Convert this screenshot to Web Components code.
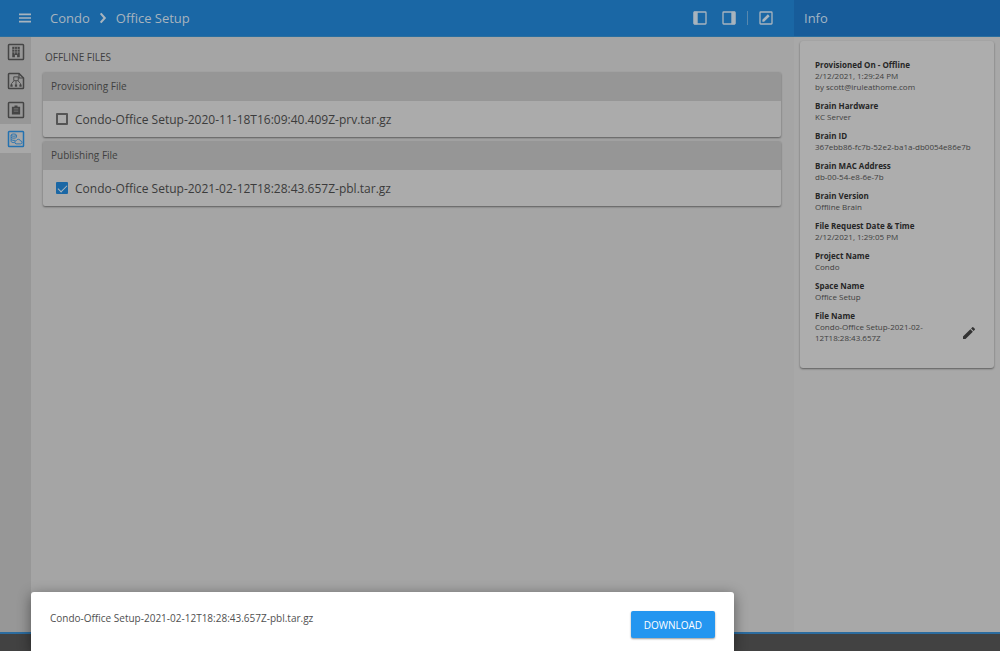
<!DOCTYPE html>
<html lang="en">
<head>
<meta charset="utf-8">
<title>Office Setup</title>
<style>
html, body { height: 100%; margin: 0; }
body { font-family: "Open Sans", "Noto Sans", sans-serif; color: #404040; background: #a5a5a5; }
</style>
</head>
<body>
<office-app></office-app>
<script>
function define(name, html, setup) {
  const template = document.createElement('template');
  template.innerHTML = '<style>*{box-sizing:border-box}</style>' + html;
  customElements.define(name, class extends HTMLElement {
    connectedCallback() {
      if (this.shadowRoot) return;
      this.attachShadow({ mode: 'open' }).append(template.content.cloneNode(true));
      if (setup) setup(this, this.shadowRoot);
    }
  });
}

const icons = {
  menu: '<path d="M3 6.500h18M3 12h18M3 17.500h18" stroke-width="2.400"/>',
  chevron: '<path d="M8 4l7 8-7 8" stroke-width="3.600"/>',
  left: '<rect x="3" y="3" width="18" height="18" rx="1" stroke-width="2"/><path d="M3 3h5v18H3z" fill="currentColor"/>',
  right: '<rect x="3" y="3" width="18" height="18" rx="1" stroke-width="2"/><path d="M16 3h5v18h-5z" fill="currentColor"/>',
  edit: '<rect x="3" y="3" width="18" height="18" rx="1" stroke-width="2"/><path d="M6.500 17.500v-2.700l8.300-8.300 2.700 2.700-8.300 8.300z" fill="currentColor" stroke="none"/>',
  pencil: '<path fill="currentColor" stroke="none" d="M3 17.250V21h3.750L17.810 9.940l-3.750-3.750L3 17.250zM20.710 7.040a1 1 0 0 0 0-1.410l-2.340-2.340a1 1 0 0 0-1.410 0l-1.830 1.830 3.750 3.750 1.830-1.830z"/>',
  building: '<rect x="2" y="2" width="20" height="20" rx="1" stroke-width="2"/><path d="M7 5h10v14h-3.500v-3h-3v3H7z" fill="currentColor" stroke="none"/><path d="M10.200 5v10M13.800 5v10M7 8.500h10M7 12h10" stroke="#979797" stroke-width=".8"/>',
  tree: '<path d="M3 2h13l6 6v13a1 1 0 0 1-1 1H3a1 1 0 0 1-1-1V3a1 1 0 0 1 1-1z" stroke-width="2"/><path d="M16 2v6h6" stroke-width="1.500"/><path d="M9 6.500h6v5H9zM12 12v6M6 18v-2.500L9 12M18 18v-2.500L15 12" stroke-width="1.200"/><path d="M4.500 16.500h3v3h-3zM10.500 16.500h3v3h-3zM16.500 16.500h3v3h-3z" fill="currentColor" stroke="none"/>',
  clipboard: '<rect x="2" y="2" width="20" height="20" rx="1" stroke-width="2"/><path d="M6.500 7.500h3.500V6h4v1.500h3.500V18h-11z" fill="currentColor" stroke="none"/><path d="M9 10.500h6M9 13.500h6" stroke="#979797" stroke-width=".8"/>',
  files: '<rect x="2" y="2" width="20" height="20" rx="1" stroke-width="2"/><ellipse cx="9" cy="6.800" rx="3.600" ry="1.500" stroke-width="1.200"/><path d="M5.400 7v8c0 1.200 2 1.800 4.600 1.800M5.400 9.800c1 1.500 6.200 1.500 7.200 0V7M5.400 12.600c1 1.200 4 1.400 5.200 1.200M12 18.500h6a2 2 0 0 0 0-4 3 3 0 0 0-5.500-.500A2.300 2.300 0 0 0 12 18.500z" stroke-width="1.200"/>'
};
customElements.define('app-icon', class extends HTMLElement {
  connectedCallback() {
    if (this.shadowRoot) return;
    this.attachShadow({ mode: 'open' }).innerHTML =
      '<style>:host{display:block;width:18px;height:18px;flex:none}svg{display:block;width:100%;height:100%}</style>' +
      '<svg viewBox="0 0 24 24" fill="none" stroke="currentColor" aria-hidden="true">' + icons[this.getAttribute('name')] + '</svg>';
  }
});

define('app-header', `
<style>
:host { display: flex; align-items: center; height: 37px; padding: 0 20px 0 17px; background: #1a67a5; color: #a8b4be; font-size: 13px; border-bottom: 1px solid #2a6f9f; box-sizing: border-box; }
button { all: unset; display: flex; cursor: pointer; }
nav { display: flex; align-items: center; gap: 6px; margin-left: 17px; flex: 1; white-space: nowrap; }
a { color: inherit; text-decoration: none; }
.chev { width: 14px; height: 14px; }
.menu { width: 16px; height: 16px; }
.tools, .panels { display: flex; align-items: center; gap: 10px; }
.panels { gap: 13px; }
.tools app-icon { width: 16px; height: 16px; }
.tools i { width: 1px; height: 14px; background: #5888ae; }
</style>
<button aria-label="Menu"><app-icon class="menu" name="menu"></app-icon></button>
<nav><a href="#condo">Condo</a><app-icon class="chev" name="chevron"></app-icon><a href="#setup">Office Setup</a></nav>
<div class="tools">
<div class="panels">
<button aria-label="Toggle left panel"><app-icon name="left"></app-icon></button>
<button aria-label="Toggle right panel"><app-icon name="right"></app-icon></button>
</div>
<i></i>
<button aria-label="Edit"><app-icon name="edit"></app-icon></button>
</div>`);

define('side-rail', `
<style>
:host { display: block; background: #979797; }
a { display: flex; align-items: center; justify-content: center; height: 29px; color: #454545; }
a.on { background: #a8a8a8; color: #2371b0; }
</style>
<nav>
<a href="#building" aria-label="Building"><app-icon name="building"></app-icon></a>
<a href="#tree" aria-label="Structure"><app-icon name="tree"></app-icon></a>
<a href="#tasks" aria-label="Tasks"><app-icon name="clipboard"></app-icon></a>
<a href="#files" aria-label="Offline files" class="on"><app-icon name="files"></app-icon></a>
</nav>`);

define('file-card', `
<style>
:host { display: block; background: #ababab; border-radius: 2px; overflow: hidden; box-shadow: 0 1px 2px rgba(0,0,0,.45); }
h2 { margin: 0; padding: 0 8px; font-size: 10px; line-height: 29px; font-weight: 400; background: #969696; color: #404040; }
label { display: flex; align-items: center; gap: 7px; padding: 0 13px; height: 36px; font-size: 12px; color: #3b3b3b; white-space: nowrap; }
input { appearance: none; width: 12px; height: 12px; margin: 0; border: 2px solid #555; border-radius: 1px; display: grid; place-items: center; }
input:checked { background: #1a67a5; border-color: #1a67a5; }
input:checked::after { content: ""; width: 8px; height: 4px; border: solid #b0b8be; border-width: 0 0 1px 1px; transform: translateY(-1px) rotate(-45deg); }
</style>
<h2></h2>
<label><input type="checkbox"><span><slot></slot></span></label>`, (host, root) => {
  root.querySelector('h2').textContent = host.getAttribute('heading');
  root.querySelector('input').checked = host.hasAttribute('checked');
});

define('info-item', `
<style>
:host { display: block; font-size: 8px; line-height: 11px; margin-bottom: 8px; color: #404040; }
dl, dd { margin: 0; }
dt { font-weight: 700; color: #262626; }
</style>
<dl><dt></dt><dd><slot></slot></dd></dl>`, (host, root) => {
  root.querySelector('dt').textContent = host.getAttribute('label');
});

define('info-panel', `
<style>
:host { display: flex; flex-direction: column; background: #a8a8a8; }
h1 { margin: 0; padding: 0 10px; height: 37px; line-height: 37px; font-size: 13px; font-weight: 400; color: #a3b5c4; background: #175c9a; border-bottom: 1px solid #2a6f9f; }
section { margin: 4px 6px 0; padding: 18px 15px 17px; background: #adadad; border-radius: 3px; box-shadow: 0 1px 2px rgba(0,0,0,.45); }
.last { display: flex; justify-content: space-between; align-items: flex-end; }
.last info-item { width: 130px; }
button { all: unset; color: #333; cursor: pointer; padding: 0 2px 10px; }
button app-icon { width: 16px; height: 16px; }
</style>
<h1>Info</h1>
<section>
<info-item label="Provisioned On - Offline">2/12/2021, 1:29:24 PM<br>by scott@iruleathome.com</info-item>
<info-item label="Brain Hardware">KC Server</info-item>
<info-item label="Brain ID">367ebb86-fc7b-52e2-ba1a-db0054e86e7b</info-item>
<info-item label="Brain MAC Address">db-00-54-e8-6e-7b</info-item>
<info-item label="Brain Version">Offline Brain</info-item>
<info-item label="File Request Date &amp; Time">2/12/2021, 1:29:05 PM</info-item>
<info-item label="Project Name">Condo</info-item>
<info-item label="Space Name">Office Setup</info-item>
<div class="last"><info-item label="File Name">Condo-Office Setup-2021-02-12T18:28:43.657Z</info-item>
<button aria-label="Edit file name"><app-icon name="pencil"></app-icon></button></div>
</section>`);

define('download-sheet', `
<style>
:host { display: flex; justify-content: space-between; align-items: flex-start; padding: 19px 19px 13px; background: #fff; border-radius: 3px 3px 0 0; box-shadow: 0 3px 14px rgba(0,0,0,.45); font-size: 10px; color: #505050; }
span { line-height: 15px; }
button { border: 0; border-radius: 2px; padding: 0 13px; height: 27px; background: #2496f0; color: #fff; font: inherit; box-shadow: 0 1px 2px rgba(0,0,0,.4); }
</style>
<span><slot></slot></span><button>DOWNLOAD</button>`);

define('office-app', `
<style>
:host { display: grid; grid-template-columns: 31px minmax(0, 1fr) 206px; grid-template-rows: auto 1fr auto; min-height: 100vh; position: relative; }
app-header { grid-column: 1 / 3; }
info-panel { grid-column: 3; grid-row: 1 / 3; }
main { padding: 13px 13px 12px 12px; display: flex; flex-direction: column; gap: 4px; background: #a5a5a5; }
h2 { margin: 0 2px 3px; font-size: 10px; line-height: 15px; font-weight: 400; color: #404040; }
footer { grid-column: 1 / -1; height: 19px; background: #424242; border-top: 2px solid #2c6c9f; }
download-sheet { position: absolute; left: 31px; bottom: 0; width: calc(100% - 297px); box-sizing: border-box; }
</style>
<app-header></app-header>
<side-rail></side-rail>
<main>
<h2>OFFLINE FILES</h2>
<file-card heading="Provisioning File">Condo-Office Setup-2020-11-18T16:09:40.409Z-prv.tar.gz</file-card>
<file-card heading="Publishing File" checked>Condo-Office Setup-2021-02-12T18:28:43.657Z-pbl.tar.gz</file-card>
</main>
<info-panel></info-panel>
<footer></footer>
<download-sheet role="dialog" aria-label="Download file">Condo-Office Setup-2021-02-12T18:28:43.657Z-pbl.tar.gz</download-sheet>`);
</script>
</body>
</html>
